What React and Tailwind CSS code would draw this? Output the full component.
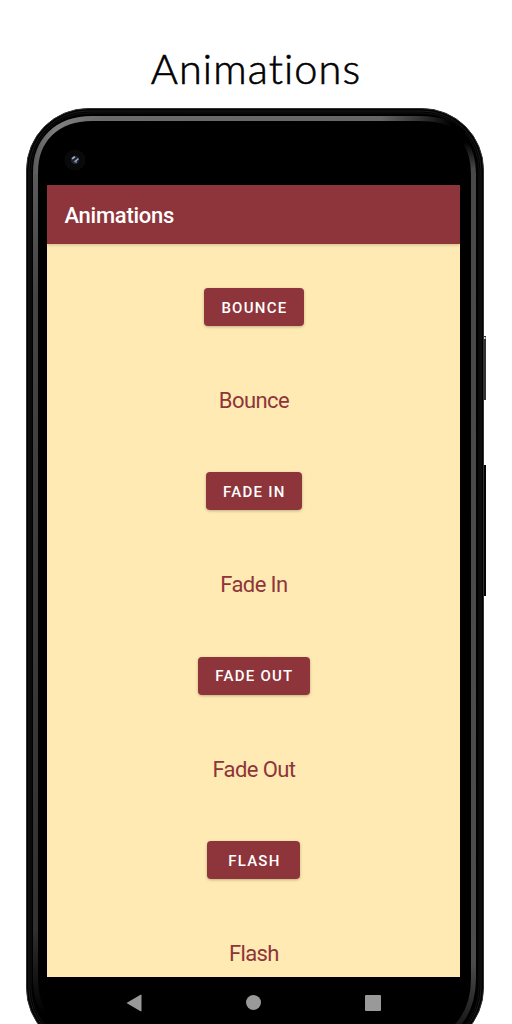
import React from "react";

const ROWS = [
  { label: "Bounce", width: "w-[100px]" },
  { label: "Fade In", width: "w-[96.5px]" },
  { label: "Fade Out", width: "w-[112.5px]" },
  { label: "Flash", width: "w-[93px]" },
];

function Bezel() {
  return (
    <svg className="absolute left-0 top-0" width="464" height="944" viewBox="0 0 464 944" fill="none" aria-hidden="true">
      <defs>
        <linearGradient id="shine" x1="8" y1="0" x2="452" y2="0" gradientUnits="userSpaceOnUse">
          <stop offset="0" stopColor="#5c5c5c" />
          <stop offset="0.05" stopColor="#808080" />
          <stop offset="0.15" stopColor="#6c6c6c" />
          <stop offset="0.78" stopColor="#666" />
          <stop offset="0.87" stopColor="#333" />
          <stop offset="0.94" stopColor="#000" />
        </linearGradient>
        <linearGradient id="side" x1="0" y1="60" x2="0" y2="906" gradientUnits="userSpaceOnUse">
          <stop offset="0" stopColor="#5c5c5c" />
          <stop offset="0.15" stopColor="#444" />
          <stop offset="0.9" stopColor="#303030" />
          <stop offset="1" stopColor="#000" />
        </linearGradient>
        <linearGradient id="sideRight" x1="0" y1="34" x2="0" y2="926" gradientUnits="userSpaceOnUse">
          <stop offset="0" stopColor="#000" />
          <stop offset="0.03" stopColor="#484848" />
          <stop offset="0.92" stopColor="#4c4c4c" />
          <stop offset="1" stopColor="#111" />
        </linearGradient>
      </defs>
      <rect x="457" y="228" width="3" height="64" fill="#333" />
      <rect x="458" y="229" width="1.5" height="2" fill="#ddd" />
      <rect x="457" y="357" width="3" height="131" fill="#050505" />
      <rect x="0.5" y="0.5" width="457" height="941" rx="61.5" fill="#000" stroke="#333" />
      <rect x="3" y="3" width="452" height="936" rx="59" stroke="#1c1c1c" />
      <rect x="5" y="5" width="448" height="932" rx="57" stroke="#121212" />
      <path d="M9.5 64V870C9.5 890 14 900 20 908" stroke="url(#side)" strokeWidth="5" />
      <path d="M9.5 66V64C9.5 32 31 10.5 66 10.5H392C418 10.5 430 17 438 26" stroke="url(#shine)" strokeWidth="5" />
      <path d="M439 34C445 43 447.5 52 447.5 66V870C447.5 898 437 914 424 924" stroke="url(#sideRight)" strokeWidth="5" />
      <circle cx="49" cy="52" r="10.5" fill="#090909" />
      <circle cx="49" cy="52" r="4.2" fill="#22232b" />
      <path d="M46.5 50.5L48.5 49M49 53.5L52 51" stroke="#9cadd5" strokeWidth="1.6" strokeLinecap="round" />
      <circle cx="50" cy="54" r="1" fill="#7285b4" />
    </svg>
  );
}

function AnimationRow({ label, width }) {
  return (
    <section className="flex h-[184.4px] shrink-0 flex-col items-center">
      <button className={`${width} flex h-[38px] items-center justify-center rounded-[4px] bg-[#8e343b] pl-px pt-[2px] text-[15px] font-medium uppercase tracking-[1.25px] text-white shadow-[0_1px_3px_rgba(0,0,0,0.25)]`}>
        {label}
      </button>
      <p className="mt-[61px] text-[22px] leading-[28px] tracking-[-0.6px] text-[#8e343b]">{label}</p>
    </section>
  );
}

export default function App() {
  return (
    <div className="h-[1024px] w-[512px] overflow-hidden bg-white font-['Roboto',sans-serif]">
      <h1 className="flex h-[108px] items-center justify-center pt-[29px] font-['Lato',sans-serif] text-[41.5px] font-light tracking-[1.1px] text-black [-webkit-text-stroke:0.6px_black]">
        Animations
      </h1>
      <div className="relative ml-[26px] w-[464px]">
        <Bezel />
        <div className="relative flex h-[916px] w-[458px] flex-col pl-[21.4px] pr-[23.6px] pt-[76.5px]">
          <header className="relative z-10 flex h-[59px] shrink-0 items-center bg-[#8e343b] pl-[17px] pt-[3px] text-[22px] font-medium tracking-[-0.25px] text-white shadow-[0_1px_3px_rgba(0,0,0,0.2)]">
            Animations
          </header>
          <main className="h-[733.7px] shrink-0 overflow-hidden bg-[#feeab2] pt-[44.3px]">
            {ROWS.map((row) => (
              <AnimationRow key={row.label} {...row} />
            ))}
          </main>
          <nav className="flex h-[46.8px] items-center justify-between pl-[78.6px] pr-[79.4px] pt-[4px] text-[#999]">
            <svg width="16" height="18" viewBox="0 0 16 18" fill="currentColor" aria-label="Back"><path d="M.5 9L14.5.8Q15.5.3 15.5 1.3V16.7Q15.5 17.7 14.5 17.2Z" /></svg>
            <span className="size-[15px] rounded-full bg-current" />
            <span className="size-[16px] rounded-[1px] bg-current" />
          </nav>
        </div>
      </div>
    </div>
  );
}
